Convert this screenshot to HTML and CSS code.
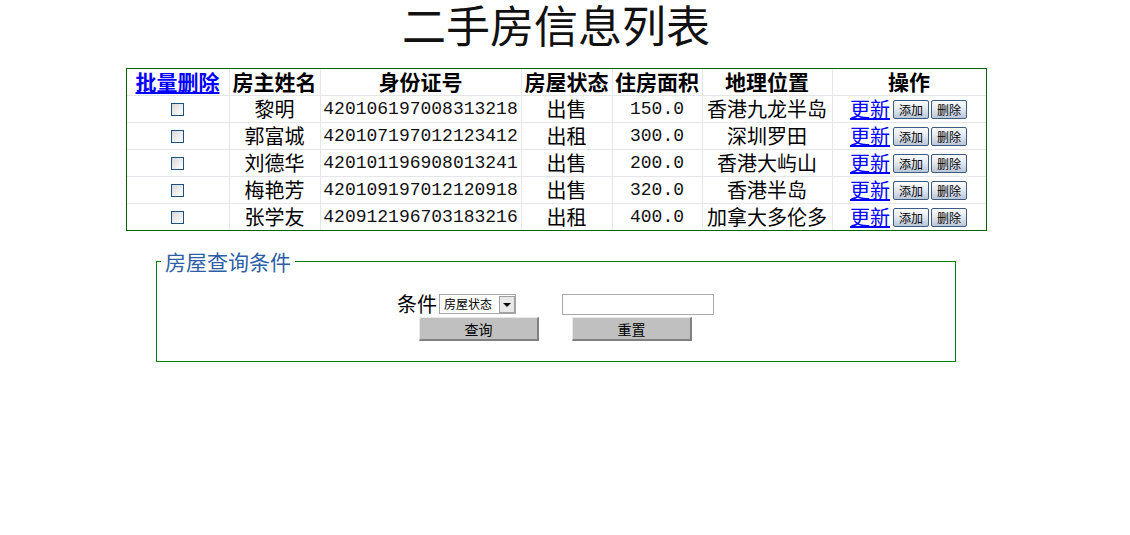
FILE: index.html
```html
<!DOCTYPE html>
<html lang="zh-CN">
<head>
<meta charset="utf-8">
<title>二手房信息列表</title>
<link rel="stylesheet" href="styles.css">
</head>
<body>
<div class="page">
  <h1 class="title">二手房信息列表</h1>
  <table class="list">
    <thead>
      <tr>
        <th class="c1"><div class="cell"><a href="#" class="lnk">批量删除</a></div></th>
        <th class="c2"><div class="cell">房主姓名</div></th>
        <th class="c3"><div class="cell">身份证号</div></th>
        <th class="c4"><div class="cell">房屋状态</div></th>
        <th class="c5"><div class="cell">住房面积</div></th>
        <th class="c6"><div class="cell">地理位置</div></th>
        <th class="c7"><div class="cell">操作</div></th>
      </tr>
    </thead>
    <tbody>
      <tr>
        <td><div class="cell"><input type="checkbox" class="chk"></div></td>
        <td><div class="cell">黎明</div></td>
        <td><div class="cell num">420106197008313218</div></td>
        <td><div class="cell">出售</div></td>
        <td><div class="cell num">150.0</div></td>
        <td><div class="cell">香港九龙半岛</div></td>
        <td><div class="cell ops"><a href="#" class="lnk">更新</a><button class="sbtn">添加</button><button class="sbtn">删除</button></div></td>
      </tr>
      <tr>
        <td><div class="cell"><input type="checkbox" class="chk"></div></td>
        <td><div class="cell">郭富城</div></td>
        <td><div class="cell num">420107197012123412</div></td>
        <td><div class="cell">出租</div></td>
        <td><div class="cell num">300.0</div></td>
        <td><div class="cell">深圳罗田</div></td>
        <td><div class="cell ops"><a href="#" class="lnk">更新</a><button class="sbtn">添加</button><button class="sbtn">删除</button></div></td>
      </tr>
      <tr>
        <td><div class="cell"><input type="checkbox" class="chk"></div></td>
        <td><div class="cell">刘德华</div></td>
        <td><div class="cell num">420101196908013241</div></td>
        <td><div class="cell">出售</div></td>
        <td><div class="cell num">200.0</div></td>
        <td><div class="cell">香港大屿山</div></td>
        <td><div class="cell ops"><a href="#" class="lnk">更新</a><button class="sbtn">添加</button><button class="sbtn">删除</button></div></td>
      </tr>
      <tr>
        <td><div class="cell"><input type="checkbox" class="chk"></div></td>
        <td><div class="cell">梅艳芳</div></td>
        <td><div class="cell num">420109197012120918</div></td>
        <td><div class="cell">出售</div></td>
        <td><div class="cell num">320.0</div></td>
        <td><div class="cell">香港半岛</div></td>
        <td><div class="cell ops"><a href="#" class="lnk">更新</a><button class="sbtn">添加</button><button class="sbtn">删除</button></div></td>
      </tr>
      <tr class="last">
        <td><div class="cell"><input type="checkbox" class="chk"></div></td>
        <td><div class="cell">张学友</div></td>
        <td><div class="cell num">420912196703183216</div></td>
        <td><div class="cell">出租</div></td>
        <td><div class="cell num">400.0</div></td>
        <td><div class="cell">加拿大多伦多</div></td>
        <td><div class="cell ops"><a href="#" class="lnk">更新</a><button class="sbtn">添加</button><button class="sbtn">删除</button></div></td>
      </tr>
    </tbody>
  </table>

  <fieldset class="query">
    <legend>房屋查询条件</legend>
    <div class="qgrid">
      <div class="qcell">
        <span class="qlabel">条件</span>
        <span class="selwrap">
          <span class="sel">房屋状态</span>
          <span class="selarrow"></span>
        </span>
      </div>
      <div class="qcell"><input type="text" class="txt"></div>
      <div class="qcell qbtn1"><button class="gbtn">查询</button></div>
      <div class="qcell qbtn2"><button class="gbtn">重置</button></div>
    </div>
  </fieldset>
</div>
</body>
</html>
```

FILE: styles.css
```css
html, body {
  margin: 0;
  padding: 0;
  background: #ffffff;
}

body {
  font-family: "Noto Sans CJK SC", "Noto Sans", sans-serif;
  color: #000;
}

.page {
  width: 1112px;
}

.title {
  margin: 0;
  line-height: 48px;
  font-size: 44px;
  font-weight: normal;
  text-align: center;
  color: #111;
}

.list {
  margin: 20px auto 0;
  width: 861px;
  table-layout: fixed;
  border-collapse: separate;
  border-spacing: 0;
  border: 1px solid #006400;
}

.list th,
.list td {
  box-sizing: border-box;
  padding: 0;
  text-align: center;
  white-space: nowrap;
  border-right: 1px solid #e4e6ea;
  border-bottom: 1px solid #e4e6ea;
  font-size: 20px;
  line-height: 20px;
}

.list th:last-child,
.list td:last-child {
  border-right: none;
}

.list tr.last td {
  border-bottom: none;
}

.cell {
  height: 26px;
  display: flex;
  align-items: center;
  justify-content: center;
  line-height: 20px;
}

.list th {
  font-size: 21px;
  font-weight: bold;
}

.list th .cell {
  padding-bottom: 2px;
  box-sizing: border-box;
}

.c1 { width: 103px; }
.c2 { width: 91px; }
.c3 { width: 201px; }
.c4 { width: 91px; }
.c5 { width: 90px; }
.c6 { width: 130px; }
.c7 { width: 153px; }

.lnk {
  color: #0000ff;
  text-decoration: underline;
}

.num {
  font-family: "Liberation Mono", "DejaVu Sans Mono", monospace;
  font-size: 18px;
  color: #111;
}

.chk {
  appearance: none;
  -webkit-appearance: none;
  width: 13px;
  height: 13px;
  margin: 1px 0 0;
  border: 1px solid #1c5180;
  background: linear-gradient(135deg, #d8d8d8 0%, #f4f4f4 70%, #ffffff 100%);
}

.ops .lnk {
  margin-right: 2px;
}

.sbtn {
  box-sizing: border-box;
  width: 36px;
  height: 19px;
  padding: 0;
  margin: 0 1px;
  font-family: "Noto Sans CJK SC", sans-serif;
  font-size: 12px;
  line-height: 15px;
  color: #000;
  border: 1px solid #3d5a80;
  border-radius: 2px;
  background: linear-gradient(to bottom, #fbfcfd 0%, #e4e9f0 45%, #b9c6d7 100%);
}

.query {
  box-sizing: border-box;
  width: 800px;
  margin: 18px 0 0 156px;
  padding: 21px 0 20px;
  border: 1px solid #008000;
}

.query legend {
  margin-left: 4px;
  padding: 0 4px;
  font-size: 21px;
  line-height: 24px;
  color: #2e5ea6;
}

.qgrid {
  display: grid;
  grid-template-columns: 162px 154px;
  grid-template-rows: 20px 24px;
  row-gap: 3px;
  justify-content: center;
}

.qcell {
  display: flex;
  align-items: center;
}

.qlabel {
  font-size: 20px;
  line-height: 20px;
  margin-left: -1px;
}

.selwrap {
  position: relative;
  display: block;
  margin-left: 2px;
  width: 77px;
  height: 20px;
}

.sel {
  display: block;
  box-sizing: border-box;
  width: 77px;
  height: 20px;
  padding: 0 0 0 4px;
  border: 1px solid #a5a5a5;
  background: #fff;
  font-size: 12px;
  line-height: 17px;
  color: #000;
}

.selarrow {
  position: absolute;
  right: 1px;
  top: 2px;
  width: 16px;
  height: 17px;
  box-sizing: border-box;
  border: 1px solid #a0a0a0;
  background: #e8e8e8;
}

.selarrow::after {
  content: "";
  position: absolute;
  left: 3px;
  top: 6px;
  border-left: 4px solid transparent;
  border-right: 4px solid transparent;
  border-top: 4px solid #000;
}

.txt {
  box-sizing: border-box;
  width: 152px;
  height: 21px;
  margin: 0 0 0 2px;
  padding: 0 2px;
  border: 1px solid #a9a9a9;
  background: #fff;
}

.qbtn1 {
  justify-content: center;
}

.qbtn2 {
  justify-content: flex-start;
}

.qbtn2 .gbtn {
  margin-left: 12px;
}

.gbtn {
  box-sizing: border-box;
  width: 120px;
  height: 24px;
  margin: 0;
  padding: 0;
  font-family: "Noto Sans CJK SC", sans-serif;
  font-size: 14px;
  line-height: 18px;
  color: #000;
  background: #c0c0c0;
  border-style: solid;
  border-width: 1px 2px 2px 1px;
  border-color: #e8e8e8 #808080 #808080 #e8e8e8;
}
```
